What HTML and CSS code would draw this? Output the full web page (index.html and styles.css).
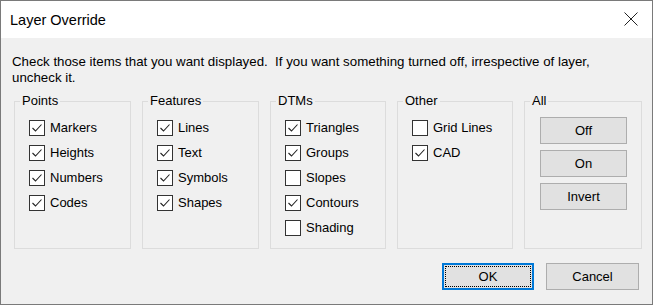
FILE: index.html
```html
<!DOCTYPE html>
<html lang="en">
<head>
    <meta charset="UTF-8">
    <title>Layer Override</title>
    <link rel="stylesheet" href="styles.css">
</head>
<body>
    <div class="dialog">
        <div class="titlebar">
            <span class="title">Layer Override</span>
            <svg class="close" width="14" height="14" viewBox="0 0 14 14">
                <path d="M0.5 0.5 L13.5 13.5 M13.5 0.5 L0.5 13.5" stroke="#222" stroke-width="1" fill="none"/>
            </svg>
        </div>

        <div class="content">
            <p class="intro">Check those items that you want displayed.&nbsp; If you want something turned off, irrespective of layer, uncheck it.</p>

            <div class="groups">
                <fieldset class="group">
                    <legend>Points</legend>
                    <label class="check"><span class="box"><svg viewBox="0 0 14 14"><polyline points="2.5,7 5.5,10 11.5,3.5"/></svg></span>Markers</label>
                    <label class="check"><span class="box"><svg viewBox="0 0 14 14"><polyline points="2.5,7 5.5,10 11.5,3.5"/></svg></span>Heights</label>
                    <label class="check"><span class="box"><svg viewBox="0 0 14 14"><polyline points="2.5,7 5.5,10 11.5,3.5"/></svg></span>Numbers</label>
                    <label class="check"><span class="box"><svg viewBox="0 0 14 14"><polyline points="2.5,7 5.5,10 11.5,3.5"/></svg></span>Codes</label>
                </fieldset>

                <fieldset class="group">
                    <legend>Features</legend>
                    <label class="check"><span class="box"><svg viewBox="0 0 14 14"><polyline points="2.5,7 5.5,10 11.5,3.5"/></svg></span>Lines</label>
                    <label class="check"><span class="box"><svg viewBox="0 0 14 14"><polyline points="2.5,7 5.5,10 11.5,3.5"/></svg></span>Text</label>
                    <label class="check"><span class="box"><svg viewBox="0 0 14 14"><polyline points="2.5,7 5.5,10 11.5,3.5"/></svg></span>Symbols</label>
                    <label class="check"><span class="box"><svg viewBox="0 0 14 14"><polyline points="2.5,7 5.5,10 11.5,3.5"/></svg></span>Shapes</label>
                </fieldset>

                <fieldset class="group">
                    <legend>DTMs</legend>
                    <label class="check"><span class="box"><svg viewBox="0 0 14 14"><polyline points="2.5,7 5.5,10 11.5,3.5"/></svg></span>Triangles</label>
                    <label class="check"><span class="box"><svg viewBox="0 0 14 14"><polyline points="2.5,7 5.5,10 11.5,3.5"/></svg></span>Groups</label>
                    <label class="check"><span class="box"></span>Slopes</label>
                    <label class="check"><span class="box"><svg viewBox="0 0 14 14"><polyline points="2.5,7 5.5,10 11.5,3.5"/></svg></span>Contours</label>
                    <label class="check"><span class="box"></span>Shading</label>
                </fieldset>

                <fieldset class="group">
                    <legend>Other</legend>
                    <label class="check"><span class="box"></span>Grid Lines</label>
                    <label class="check"><span class="box"><svg viewBox="0 0 14 14"><polyline points="2.5,7 5.5,10 11.5,3.5"/></svg></span>CAD</label>
                </fieldset>

                <fieldset class="group all">
                    <legend>All</legend>
                    <button class="btn">Off</button>
                    <button class="btn">On</button>
                    <button class="btn">Invert</button>
                </fieldset>
            </div>

            <div class="footer">
                <button class="btn ok">OK</button>
                <button class="btn cancel">Cancel</button>
            </div>
        </div>
    </div>
</body>
</html>
```

FILE: styles.css
```css
* {
    box-sizing: border-box;
}
body {
    margin: 0;
    font-family: "Liberation Sans", Arial, sans-serif;
    font-size: 13px;
    color: #000;
    background: #fff;
}
.dialog {
    width: 653px;
    height: 305px;
    border: 1px solid #7a7a7a;
    background: #f0f0f0;
}
.titlebar {
    height: 37px;
    background: #fff;
    display: flex;
    align-items: center;
    justify-content: space-between;
    padding: 1px 14px 0 9px;
}
.title {
    font-size: 14.5px;
}
.close {
    margin-top: -2px;
}
.content {
    padding: 16px 0 0 11px;
}
.intro {
    margin: 0;
    width: 610px;
    font-size: 13.3px;
    line-height: 16px;
}
.groups {
    display: grid;
    grid-template-columns: 117px 117px 116px 116px 118px;
    column-gap: 11px;
    margin: 7px 0 0 2px;
}
.group {
    margin: 0;
    min-width: 0;
    height: 156px;
    padding: 6px 0 0 0;
    border: 1px solid #dcdcdc;
}
.group legend {
    margin-left: 5px;
    padding: 0 2px;
    line-height: 16px;
}
.check {
    display: flex;
    align-items: center;
    gap: 5px;
    height: 25px;
    margin-left: 14px;
}
.box {
    width: 16px;
    height: 16px;
    border: 1px solid #333;
    background: #fff;
    display: flex;
}
.box svg {
    width: 14px;
    height: 14px;
    fill: none;
    stroke: #222;
    stroke-width: 1.1;
}
.btn {
    font: inherit;
    color: #000;
    background: #e1e1e1;
    border: 1px solid #adadad;
    height: 27px;
    padding: 0;
}
.all {
    padding-top: 8px;
}
.all .btn {
    display: block;
    width: 87px;
    margin: 0 0 6px 15px;
}
.footer {
    display: flex;
    justify-content: flex-end;
    gap: 12px;
    margin-top: 14px;
    padding-right: 13px;
}
.ok {
    width: 92px;
    border-color: #0078d7;
    box-shadow: inset 0 0 0 1px #0078d7;
    outline: 1px dotted #000;
    outline-offset: -4px;
}
.cancel {
    width: 93px;
}
```
